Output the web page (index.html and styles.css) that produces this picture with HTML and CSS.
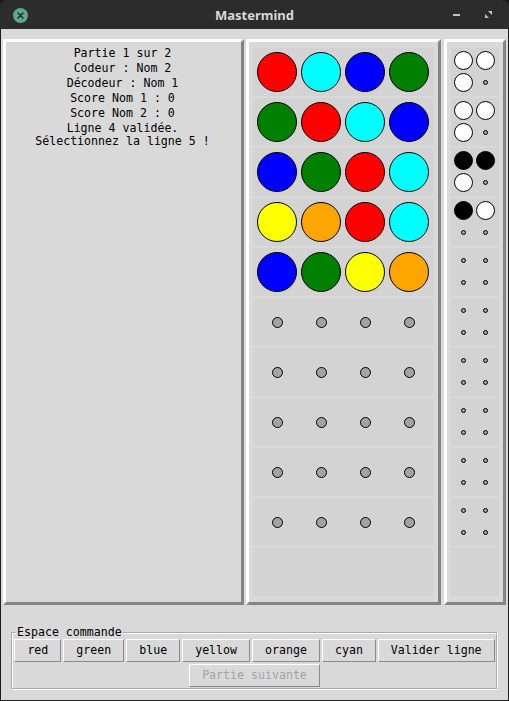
FILE: index.html
```html
<!DOCTYPE html>
<html lang="fr">
<head>
<meta charset="utf-8">
<title>Mastermind</title>
<link rel="stylesheet" href="styles.css">
</head>
<body>
<div class="window">
  <div class="titlebar">
    <div class="tb-left">
      <span class="close"><svg width="15" height="15" viewBox="0 0 15 15"><circle cx="7.5" cy="7.5" r="7.5" fill="#5aa896"/><path d="M5 5 L10 10 M10 5 L5 10" stroke="#2b2b2b" stroke-width="1.6" stroke-linecap="round"/></svg></span>
    </div>
    <div class="title">Mastermind</div>
    <div class="tb-right">
      <span class="minimize"></span>
      <svg class="maximize" width="7" height="7" viewBox="0 0 7 7"><polygon points="3,0 7,0 7,4" fill="#c4c4c4"/><polygon points="0,3 0,7 4,7" fill="#c4c4c4"/></svg>
    </div>
  </div>
  <div class="content">
    <div class="panels">
      <div class="panel info">
        <div class="line">Partie 1 sur 2</div>
        <div class="line">Codeur : Nom 2</div>
        <div class="line">Décodeur : Nom 1</div>
        <div class="line">Score Nom 1 : 0</div>
        <div class="line">Score Nom 2 : 0</div>
        <div class="msg">Ligne 4 validée.<br>Sélectionnez la ligne 5 !</div>
      </div>
      <div class="panel board">
        <div class="row"><span class="p red"></span><span class="p cyan"></span><span class="p blue"></span><span class="p green"></span></div>
        <div class="row"><span class="p green"></span><span class="p red"></span><span class="p cyan"></span><span class="p blue"></span></div>
        <div class="row"><span class="p blue"></span><span class="p green"></span><span class="p red"></span><span class="p cyan"></span></div>
        <div class="row"><span class="p yellow"></span><span class="p orange"></span><span class="p red"></span><span class="p cyan"></span></div>
        <div class="row"><span class="p blue"></span><span class="p green"></span><span class="p yellow"></span><span class="p orange"></span></div>
        <div class="row"><span class="e"></span><span class="e"></span><span class="e"></span><span class="e"></span></div>
        <div class="row"><span class="e"></span><span class="e"></span><span class="e"></span><span class="e"></span></div>
        <div class="row"><span class="e"></span><span class="e"></span><span class="e"></span><span class="e"></span></div>
        <div class="row"><span class="e"></span><span class="e"></span><span class="e"></span><span class="e"></span></div>
        <div class="row"><span class="e"></span><span class="e"></span><span class="e"></span><span class="e"></span></div>
        <div class="row"></div>
      </div>
      <div class="panel hints">
        <div class="hint"><span class="k w"></span><span class="k w"></span><span class="k w"></span><span class="e"></span></div>
        <div class="hint"><span class="k w"></span><span class="k w"></span><span class="k w"></span><span class="e"></span></div>
        <div class="hint"><span class="k b"></span><span class="k b"></span><span class="k w"></span><span class="e"></span></div>
        <div class="hint"><span class="k b"></span><span class="k w"></span><span class="e"></span><span class="e"></span></div>
        <div class="hint"><span class="e"></span><span class="e"></span><span class="e"></span><span class="e"></span></div>
        <div class="hint"><span class="e"></span><span class="e"></span><span class="e"></span><span class="e"></span></div>
        <div class="hint"><span class="e"></span><span class="e"></span><span class="e"></span><span class="e"></span></div>
        <div class="hint"><span class="e"></span><span class="e"></span><span class="e"></span><span class="e"></span></div>
        <div class="hint"><span class="e"></span><span class="e"></span><span class="e"></span><span class="e"></span></div>
        <div class="hint"><span class="e"></span><span class="e"></span><span class="e"></span><span class="e"></span></div>
        <div class="hint"></div>
      </div>
    </div>
    <fieldset class="commands">
      <legend>Espace commande</legend>
      <div class="btnrow">
        <button class="btn">red</button>
        <button class="btn">green</button>
        <button class="btn">blue</button>
        <button class="btn">yellow</button>
        <button class="btn">orange</button>
        <button class="btn">cyan</button>
        <button class="btn">Valider ligne</button>
      </div>
      <div class="btnrow">
        <button class="btn" disabled>Partie suivante</button>
      </div>
    </fieldset>
  </div>
</div>
</body>
</html>
```

FILE: styles.css
```css
html, body {
  margin: 0;
  padding: 0;
  background: #1b1b1b;
}
.window {
  width: 509px;
  height: 701px;
  box-sizing: border-box;
  display: flex;
  flex-direction: column;
  font-family: "DejaVu Sans Mono", "Liberation Mono", monospace;
  font-size: 11.6px;
  color: #000;
}
.titlebar {
  height: 29px;
  flex: none;
  background: #2c2c2c;
  border-radius: 7px 7px 0 0;
  display: grid;
  grid-template-columns: 1fr auto 1fr;
  align-items: center;
}
.tb-left {
  padding-left: 13px;
  display: flex;
  align-items: center;
}
.close {
  display: block;
  width: 15px;
  height: 15px;
  margin-top: 1px;
}
.close svg { display: block; }
.title {
  font-family: "Noto Sans", "DejaVu Sans", sans-serif;
  font-weight: bold;
  font-size: 13px;
  color: #d8d8d8;
  padding-top: 1px;
}
.tb-right {
  display: flex;
  justify-content: flex-end;
  align-items: center;
  gap: 25px;
  padding-right: 17px;
}
.minimize {
  display: block;
  width: 7px;
  height: 2px;
  background: #c4c4c4;
  margin-top: 1px;
}
.maximize { display: block; }
.content {
  flex: 1;
  background: #d9d9d9;
  border: 1px solid #1e1e1e;
  border-top: 0;
  padding: 10px 2px 0 2px;
}
.panels {
  display: flex;
  height: 566px;
}
.panel {
  box-sizing: border-box;
  border: 3px solid;
  border-color: #ffffff #848484 #848484 #ffffff;
  background: #d9d9d9;
}
.info {
  width: 241px;
  margin-right: 2px;
  padding: 4px 2px 0 0;
  text-align: center;
}
.line {
  line-height: 15px;
  white-space: pre;
}
.msg {
  line-height: 13px;
  padding-top: 1px;
}
.board {
  width: 195px;
  margin-right: 3px;
  padding: 6px 5px 6px 4px;
  display: flex;
  flex-direction: column;
  gap: 2px;
}
.row {
  height: 48px;
  flex: none;
  background: #d3d3d3;
  display: grid;
  grid-template-columns: repeat(4, 40px);
  column-gap: 4px;
  justify-content: center;
  align-items: center;
}
.p {
  width: 40px;
  height: 40px;
  box-sizing: border-box;
  border: 1px solid #000;
  border-radius: 50%;
}
.row .e {
  width: 11px;
  height: 11px;
  box-sizing: border-box;
  border: 1px solid #000;
  border-radius: 50%;
  background: #a3a3a3;
  justify-self: center;
}
.red { background: #ff0000; }
.cyan { background: #00ffff; }
.blue { background: #0000ff; }
.green { background: #008000; }
.yellow { background: #ffff00; }
.orange { background: #ffa500; }
.hints {
  width: 62px;
  padding: 6px 4px;
  display: flex;
  flex-direction: column;
  gap: 2px;
}
.hint {
  height: 48px;
  flex: none;
  box-sizing: border-box;
  background: #d3d3d3;
  padding: 3px 0 0 3px;
  display: grid;
  grid-template-columns: 19px 19px;
  grid-template-rows: 19px 19px;
  gap: 3px;
  align-content: start;
}
.k {
  width: 19px;
  height: 19px;
  box-sizing: border-box;
  border: 1px solid #000;
  border-radius: 50%;
}
.k.w { background: #ffffff; }
.k.b { background: #000000; }
.hint .e {
  width: 5px;
  height: 5px;
  box-sizing: border-box;
  border: 1px solid #000;
  border-radius: 50%;
  background: #a3a3a3;
  justify-self: center;
  align-self: center;
}
.commands {
  margin: 21px 8px 0 8px;
  padding: 0 0 1px 0;
  border: 2px groove #ffffff;
  min-inline-size: 0;
  display: flex;
  flex-direction: column;
  gap: 2px;
}
.commands legend {
  line-height: 13px;
  padding: 0 1px;
  margin-left: 3px;
  font-size: 11.6px;
}
.btnrow {
  display: flex;
  justify-content: center;
  gap: 2px;
}
.btn {
  height: 23px;
  box-sizing: border-box;
  margin: 0;
  padding: 0 12px;
  font-family: "DejaVu Sans Mono", "Liberation Mono", monospace;
  font-size: 11.6px;
  line-height: 21px;
  color: #000;
  background: #d9d9d9;
  border: 1px solid;
  border-color: #ffffff #8a8a8a #8a8a8a #ffffff;
  border-radius: 0;
}
.btn:disabled {
  color: #a3a3a3;
}
```
